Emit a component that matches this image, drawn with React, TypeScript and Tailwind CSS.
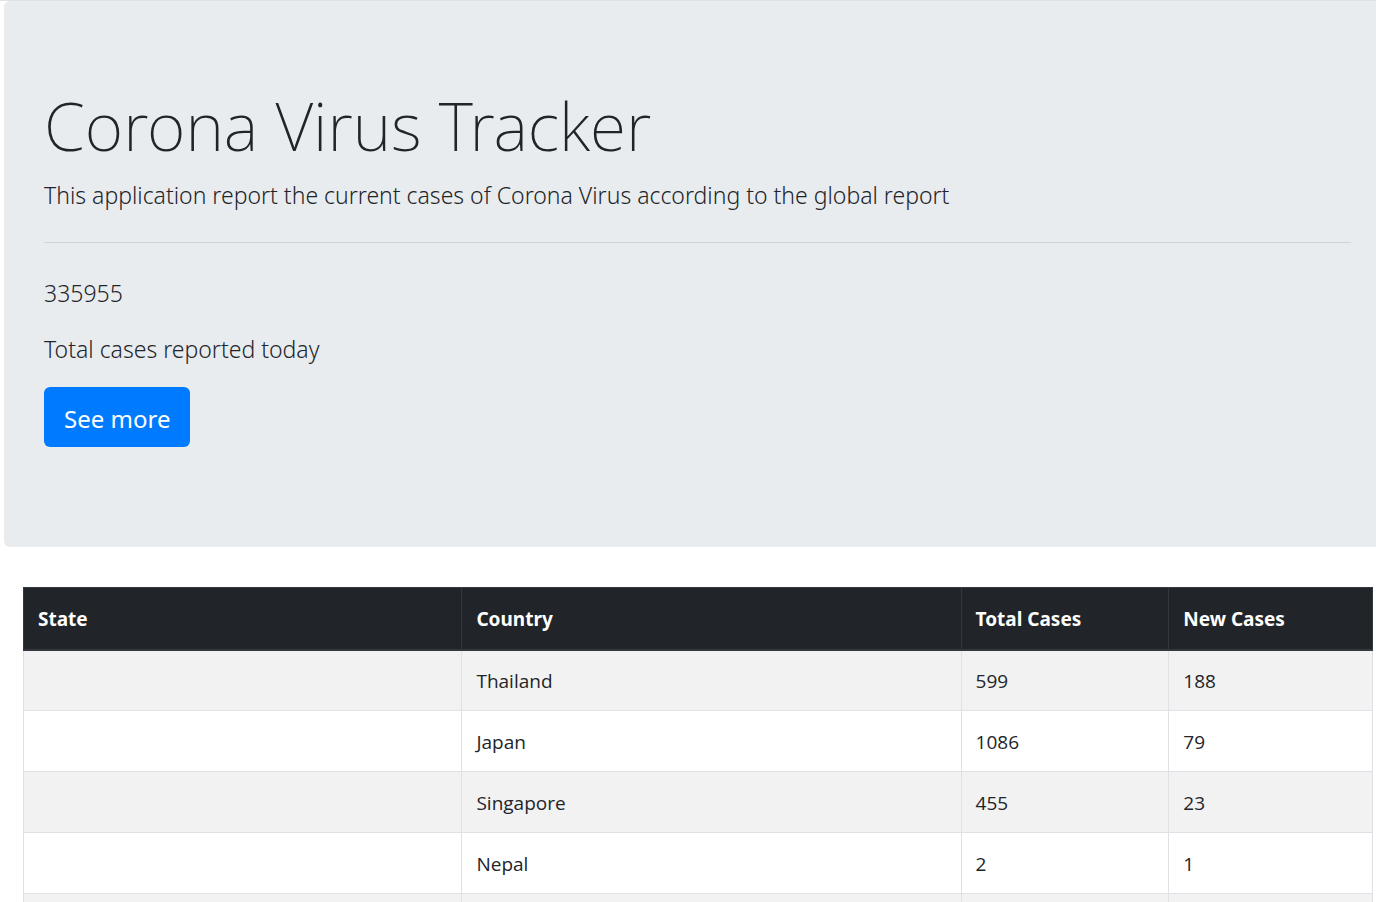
const rows = [
  { state: '', country: 'Thailand', total: 599, fresh: 188 },
  { state: '', country: 'Japan', total: 1086, fresh: 79 },
  { state: '', country: 'Singapore', total: 455, fresh: 23 },
  { state: '', country: 'Nepal', total: 2, fresh: 1 },
  { state: '', country: '', total: '', fresh: '' },
];

export default function App() {
  return (
    <div className="min-h-screen border-t border-[#dee2e6] bg-white font-['Noto_Sans','Open_Sans',sans-serif] text-[#212529]">
      <header className="ml-1 rounded-l-md bg-[#e9ecef] pt-20 pr-[25px] pb-[100px] pl-10">
        <h1 className="mt-1 text-[66px] leading-[80px] font-extralight">Corona Virus Tracker</h1>
        <p className="mt-3 text-[23px] leading-9 font-light">
          This application report the current cases of Corona Virus according to the global report
        </p>
        <hr className="mt-[29px] border-[#d1d4d7]" />
        <p className="mt-8 text-[23px] leading-9 font-light">335955</p>
        <p className="mt-5 text-[23px] leading-9 font-light">Total cases reported today</p>
        <button type="button" className="mt-5 h-[60px] rounded-md bg-[#007bff] px-5 pt-1 text-2xl text-white">
          See more
        </button>
      </header>
      <main className="mt-10 pr-[3px] pl-[23px]">
        <table className="w-full table-fixed border-collapse text-left font-['Open_Sans','Noto_Sans',sans-serif] text-[19px] leading-7">
          <colgroup>
            <col className="w-[32.5%]" />
            <col className="w-[37%]" />
            <col className="w-[15.4%]" />
            <col />
          </colgroup>
          <thead className="bg-[#212529] font-['Noto_Sans','Open_Sans',sans-serif] text-white">
            <tr className="h-[62px]">
              {['State', 'Country', 'Total Cases', 'New Cases'].map((h) => (
                <th key={h} scope="col" className="border border-b-2 border-[#32383e] px-[14px] pt-[2px] font-bold">
                  {h}
                </th>
              ))}
            </tr>
          </thead>
          <tbody>
            {rows.map((r, i) => (
              <tr key={i} className="h-[61px] odd:bg-[#f2f2f2]">
                <td className="border border-[#dee2e6] px-[14px] pt-[2px]">{r.state}</td>
                <td className="border border-[#dee2e6] px-[14px] pt-[2px]">{r.country}</td>
                <td className="border border-[#dee2e6] px-[14px] pt-[2px]">{r.total}</td>
                <td className="border border-[#dee2e6] px-[14px] pt-[2px]">{r.fresh}</td>
              </tr>
            ))}
          </tbody>
        </table>
      </main>
    </div>
  );
}
